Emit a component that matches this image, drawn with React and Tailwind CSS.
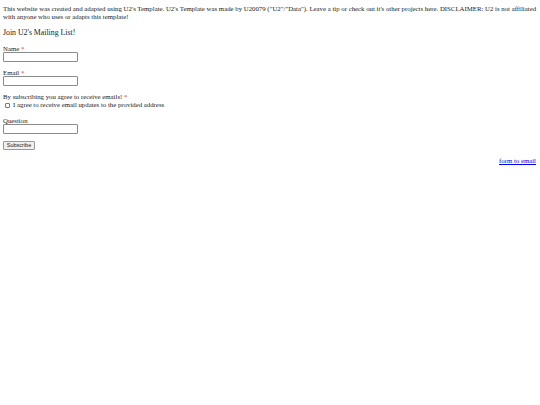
import React from "react";

const serif = { fontFamily: '"Liberation Serif", serif' };

const Field = ({ label, required, gap = "mt-[7px]" }) => (
  <div className={gap}>
    <div className="h-[8px] leading-[8px]">
      {label}
      {required && <span className="text-[#e32]"> *</span>}
    </div>
    <input
      type="text"
      className="block mt-[-1px] w-[75px] h-[10px] border border-[#8a8a8a] rounded-[1px] bg-white"
    />
  </div>
);

const App = () => {
  return (
    <div
      className="min-h-screen bg-white text-[#222] text-[6.8px] leading-[8px] px-[3px] pt-[5px] antialiased"
      style={serif}
    >
      <p className="w-[535px]">
        This website was created and adapted using U2's Template. U2's Template was made by
        U20079 ("U2"/"Data"). Leave a tip or check out it's other projects here. DISCLAIMER: U2 is
        not affiliated with anyone who uses or adapts this template!
      </p>

      <h2 className="mt-[7px] text-[7.8px] leading-[10px]">Join U2's Mailing List!</h2>

      <form onSubmit={(e) => e.preventDefault()}>
        <Field label="Name" required />
        <Field label="Email" required />

        <div className="mt-[7px]">
          <div className="h-[8px]">
            By subscribing you agree to receive emails!
            <span className="text-[#e32]"> *</span>
          </div>
          <label className="flex items-center h-[8px]">
            <input
              type="checkbox"
              className="appearance-none ml-[2px] mr-[3px] w-[5px] h-[5px] border border-[#777] rounded-[1px] bg-white"
            />
            I agree to receive email updates to the provided address
          </label>
        </div>

        <Field label="Question" gap="mt-[8px]" />

        <button
          type="submit"
          className="mt-[7px] block w-[32px] h-[9px] border border-[#999] bg-[#efefef] rounded-[1px] text-[5.5px] leading-[7px] text-[#222] font-['Liberation_Sans',sans-serif]"
        >
          Subscribe
        </button>
      </form>

      <div className="flex justify-end mt-[7px] pr-[1px]">
        <a href="#" className="text-[#0000ee] underline">
          form to email
        </a>
      </div>
    </div>
  );
};

export default App;
